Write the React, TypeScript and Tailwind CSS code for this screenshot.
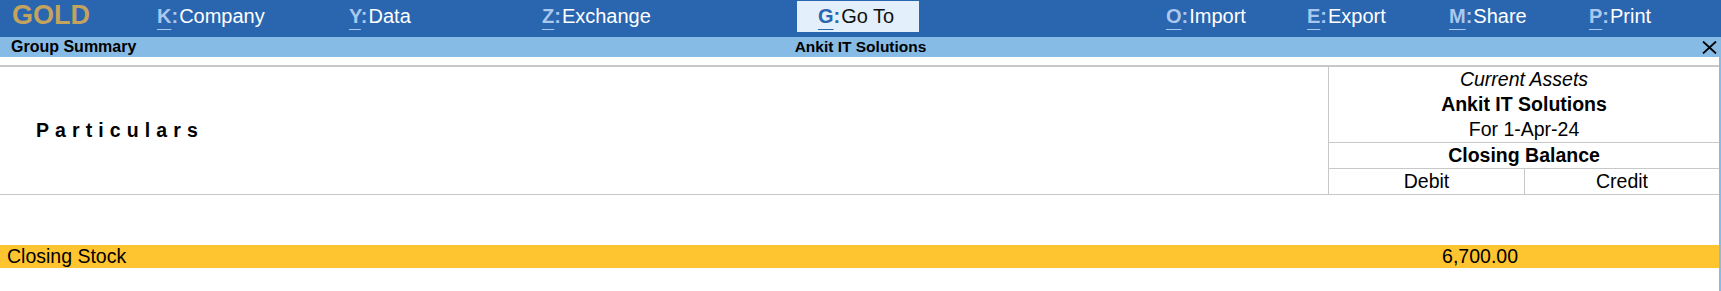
import React from 'react';

type MenuItem = { k: string; label: string; w: string };

const leftMenu: MenuItem[] = [
  { k: 'K', label: 'Company', w: 'w-[192px]' },
  { k: 'Y', label: 'Data', w: 'w-[193px]' },
  { k: 'Z', label: 'Exchange', w: 'w-[255px]' },
];

const rightMenu: MenuItem[] = [
  { k: 'O', label: 'Import', w: 'w-[141px]' },
  { k: 'E', label: 'Export', w: 'w-[142px]' },
  { k: 'M', label: 'Share', w: 'w-[140px]' },
  { k: 'P', label: 'Print', w: 'w-[120px]' },
];

const MenuEntry: React.FC<{ item: MenuItem }> = ({ item }) => (
  <div className={`${item.w} shrink-0 pt-[5px] text-[20px] leading-[23px] whitespace-nowrap`}>
    <span className="font-bold text-[#a9c8ee] underline decoration-[#a9c8ee] decoration-1 underline-offset-[6px]">
      {item.k}
    </span>
    <span className="font-bold text-[#a9c8ee] mr-[1px]">:</span>
    <span className="text-white">{item.label}</span>
  </div>
);

const App: React.FC = () => {
  return (
    <div className="w-[1721px] h-[291px] overflow-hidden bg-white text-black font-['Liberation_Sans',Arial,sans-serif]">
      {/* Top menu bar */}
      <div className="h-[37px] bg-[#2a65b0] flex items-start">
        <div className="w-[157px] shrink-0 pl-[12px] text-[27px] leading-[30px] font-bold text-[#c3a35e]">GOLD</div>
        {leftMenu.map((m) => (
          <MenuEntry key={m.k} item={m} />
        ))}
        <div className="w-[122px] h-[31px] mt-[1px] shrink-0 bg-[#e3effa] pl-[21px] pt-[4px] text-[20px] leading-[23px] whitespace-nowrap">
          <span className="font-bold text-[#2a65b0] underline decoration-[#2a65b0] decoration-1 underline-offset-[6px]">G</span>
          <span className="font-bold text-[#2a65b0] mr-[1px]">:</span>
          <span className="text-[#111]">Go To</span>
        </div>
        <div className="w-[247px] shrink-0" />
        {rightMenu.map((m) => (
          <MenuEntry key={m.k} item={m} />
        ))}
      </div>

      {/* Title bar */}
      <div className="h-[20px] bg-[#86bbe6] grid grid-cols-[1fr_auto_1fr] items-center text-[15.5px] leading-[20px] font-bold">
        <div className="pl-[11px] text-[16px]">Group Summary</div>
        <div>Ankit IT Solutions</div>
        <div className="flex justify-end pr-[4px]">
          <svg width="15" height="13" viewBox="0 0 15 13" className="mt-[1px]">
            <path d="M1 0.5 L14 12.5 M14 0.5 L1 12.5" stroke="#000" strokeWidth="1.8" fill="none" />
          </svg>
        </div>
      </div>

      {/* Report body */}
      <div className="h-[234px] border-r-2 border-[#86bbe6] pt-[8px]">
        <div className="flex border-t-2 border-b border-[#c8c8c8] h-[130px]">
          <div className="flex-1 flex items-center pl-[36px] text-[19.5px] font-bold tracking-[6.1px]">Particulars</div>
          <div className="w-[391px] shrink-0 border-l border-[#c8c8c8] flex flex-col text-[19.5px] leading-[25px] text-center">
            <div className="h-[25px] italic">Current Assets</div>
            <div className="h-[25px] font-bold">Ankit IT Solutions</div>
            <div className="h-[25px]">For 1-Apr-24</div>
            <div className="h-[26px] border-t border-[#c8c8c8] font-bold">Closing Balance</div>
            <div className="h-[26px] border-t border-[#c8c8c8] flex">
              <div className="w-[196px] border-r border-[#c8c8c8]">Debit</div>
              <div className="flex-1">Credit</div>
            </div>
          </div>
        </div>

        <div className="h-[50px]" />

        {/* Selected row */}
        <div className="h-[23px] bg-[#ffc531] flex items-center text-[19.5px] leading-[23px]">
          <div className="flex-1 pl-[7px]">Closing Stock</div>
          <div className="w-[197px] shrink-0 text-right pr-[7px]">6,700.00</div>
          <div className="w-[194px] shrink-0" />
        </div>
      </div>
    </div>
  );
};

export default App;
